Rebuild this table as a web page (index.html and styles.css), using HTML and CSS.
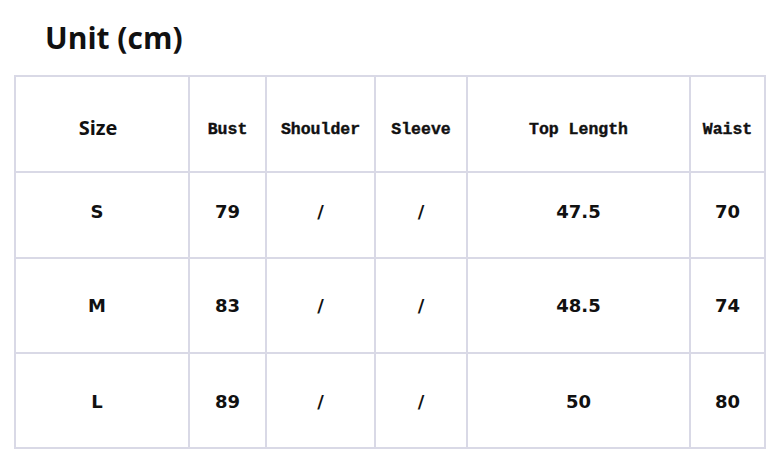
FILE: index.html
```html
<!DOCTYPE html>
<html>
<head>
<meta charset="utf-8">
<link rel="stylesheet" href="styles.css">
</head>
<body>
<h1 class="title">Unit (cm)</h1>
<div class="grid">
  <div class="cell head sans first">Size</div>
  <div class="cell head mono">Bust</div>
  <div class="cell head mono">Shoulder</div>
  <div class="cell head mono">Sleeve</div>
  <div class="cell head mono">Top Length</div>
  <div class="cell head mono">Waist</div>

  <div class="cell r1 first">S</div>
  <div class="cell r1">79</div>
  <div class="cell r1">/</div>
  <div class="cell r1">/</div>
  <div class="cell r1">47.5</div>
  <div class="cell r1">70</div>

  <div class="cell first">M</div>
  <div class="cell">83</div>
  <div class="cell">/</div>
  <div class="cell">/</div>
  <div class="cell">48.5</div>
  <div class="cell">74</div>

  <div class="cell r3 first">L</div>
  <div class="cell r3">89</div>
  <div class="cell r3">/</div>
  <div class="cell r3">/</div>
  <div class="cell r3">50</div>
  <div class="cell r3">80</div>
</div>
</body>
</html>
```
FILE: styles.css
```css
html, body {
  margin: 0;
  padding: 0;
  background: #ffffff;
}
body {
  width: 769px;
  height: 452px;
  overflow: hidden;
  color: #111;
}
.title {
  font-family: "Open Sans", "Noto Sans", sans-serif;
  font-weight: 700;
  font-size: 30px;
  line-height: 40px;
  margin: 0;
  padding: 18px 0 0 45px;
  height: 56px;
  box-sizing: border-box;
}
.grid {
  margin: 19px 0 0 14px;
  display: grid;
  grid-template-columns: 172px 75px 107px 90px 221px 73px;
  grid-template-rows: 94px 84px 93px 93px;
  gap: 2px;
  padding: 2px;
  background: #d9d9e6;
  width: max-content;
}
.cell {
  background: #fff;
  display: flex;
  align-items: center;
  justify-content: center;
  font-family: "DejaVu Sans", "Noto Sans", sans-serif;
  font-weight: 700;
  font-size: 18px;
  box-sizing: border-box;
}
.first {
  padding-right: 10px;
}
.r1 {
  padding-bottom: 8px;
}
.r3 {
  padding-top: 2px;
}
.head.sans {
  font-family: "Open Sans", "Noto Sans", sans-serif;
  font-size: 20px;
  padding-top: 6px;
  padding-right: 8px;
}
.head.mono {
  font-family: "Liberation Mono", "DejaVu Sans Mono", monospace;
  font-size: 16.5px;
  padding-top: 10px;
  -webkit-text-stroke: 0.4px #111;
}
```
